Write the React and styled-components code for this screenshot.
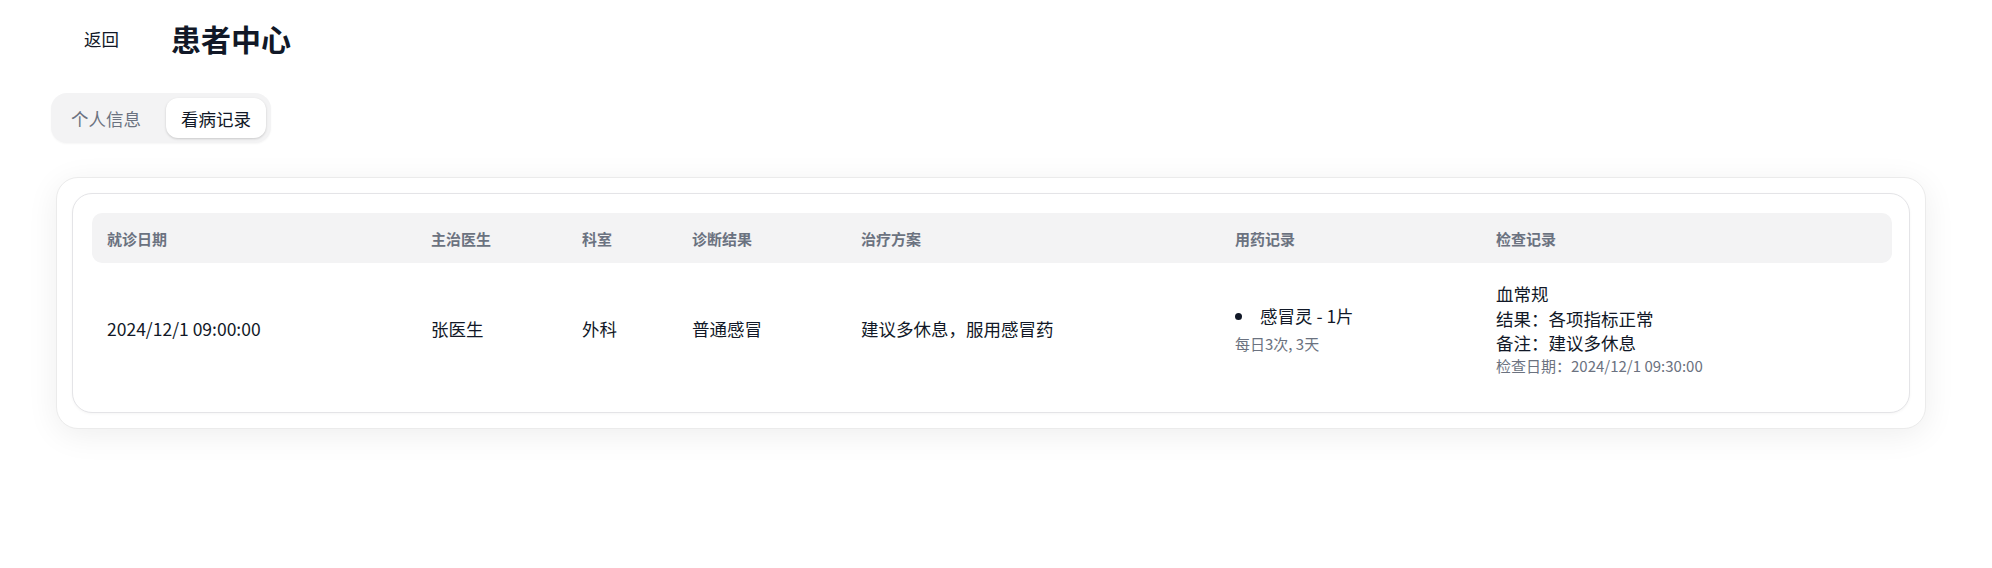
import React, { useState } from "react";
import styled, { createGlobalStyle } from "styled-components";

const GlobalStyle = createGlobalStyle`
  html, body {
    margin: 0;
    padding: 0;
    background: #ffffff;
  }
  body {
    font-family: "Noto Sans CJK SC", "Microsoft YaHei", "Noto Sans", sans-serif;
    color: #111827;
  }
`;

const Page = styled.div`
  width: 1992px;
  min-height: 568px;
  box-sizing: border-box;
  padding: 16px 66px 0 51px;
`;

const Header = styled.div`
  display: flex;
  align-items: center;
  height: 45px;
`;

const BackButton = styled.button`
  height: 45px;
  padding: 0 16px;
  margin-left: 17px;
  margin-right: 36px;
  border: none;
  background: transparent;
  font-family: inherit;
  font-size: 17.5px;
  color: #111827;
  border-radius: 10px;
  cursor: pointer;
`;

const Title = styled.h1`
  margin: 0;
  font-size: 30px;
  font-weight: 700;
  line-height: 45px;
  color: #111827;
`;

const TabList = styled.div`
  display: inline-flex;
  gap: 10px;
  margin-top: 32px;
  padding: 5px;
  border-radius: 16px;
  background: #f3f3f4;
  box-shadow: 0 1px 2px rgba(0, 0, 0, 0.04);
`;

const Tab = styled.button`
  width: 100px;
  height: 40px;
  border: none;
  border-radius: 12px;
  font-family: inherit;
  font-size: 17.5px;
  cursor: pointer;
  background: ${({ $active }) => ($active ? "#ffffff" : "transparent")};
  color: ${({ $active }) => ($active ? "#111827" : "#6b7280")};
  box-shadow: ${({ $active }) =>
    $active ? "0 1px 3px rgba(0,0,0,0.12), 0 1px 2px rgba(0,0,0,0.06)" : "none"};
`;

const Shell = styled.div`
  margin: 34px 0 0 5px;
  padding: 15px;
  border: 1px solid #ebebeb;
  border-radius: 22px;
  background: #ffffff;
  box-shadow: 0 6px 32px rgba(0, 0, 0, 0.07);
`;

const Inner = styled.div`
  padding: 19px;
  border: 1px solid #e4e4e7;
  border-radius: 20px;
  background: #ffffff;
  box-shadow: 0 1px 3px rgba(0, 0, 0, 0.04);
`;

const Table = styled.table`
  width: 100%;
  table-layout: fixed;
  border-collapse: separate;
  border-spacing: 0;
`;

const Th = styled.th`
  height: 50px;
  padding: 0 15px;
  text-align: left;
  font-size: 15px;
  font-weight: 700;
  color: #6b7280;
  background: #f3f3f4;
  &:first-child {
    border-radius: 10px 0 0 10px;
  }
  &:last-child {
    border-radius: 0 10px 10px 0;
  }
`;

const Td = styled.td`
  padding: 19px 15px 17.5px;
  font-size: 17.5px;
  line-height: 24.5px;
  color: #111827;
  vertical-align: middle;
`;

const MedLine = styled.div`
  display: flex;
  align-items: center;
`;

const Dot = styled.span`
  width: 7px;
  height: 7px;
  border-radius: 50%;
  background: #111827;
  margin: 0 18px 0 0;
`;

const Muted = styled.div`
  margin-top: ${({ $gap }) => $gap || 0}px;
  font-size: 15px;
  line-height: 20px;
  color: #6b7280;
`;

const columns = [
  { label: "就诊日期", width: 324 },
  { label: "主治医生", width: 151 },
  { label: "科室", width: 110 },
  { label: "诊断结果", width: 169 },
  { label: "治疗方案", width: 374 },
  { label: "用药记录", width: 261 },
  { label: "检查记录", width: 411 },
];

const records = [
  {
    date: "2024/12/1 09:00:00",
    doctor: "张医生",
    dept: "外科",
    diagnosis: "普通感冒",
    plan: "建议多休息，服用感冒药",
    meds: [{ name: "感冒灵 - 1片", usage: "每日3次, 3天" }],
    exams: [
      {
        name: "血常规",
        result: "各项指标正常",
        note: "建议多休息",
        date: "2024/12/1 09:30:00",
      },
    ],
  },
];

const App = () => {
  const [tab, setTab] = useState("records");

  return (
    <>
      <GlobalStyle />
      <Page>
        <Header>
          <BackButton>返回</BackButton>
          <Title>患者中心</Title>
        </Header>

        <TabList>
          <Tab $active={tab === "info"} onClick={() => setTab("info")}>个人信息</Tab>
          <Tab $active={tab === "records"} onClick={() => setTab("records")}>看病记录</Tab>
        </TabList>

        <Shell>
          <Inner>
            <Table>
              <colgroup>
                {columns.map((c) => (
                  <col key={c.label} style={{ width: c.width }} />
                ))}
              </colgroup>
              <thead>
                <tr>
                  {columns.map((c) => (
                    <Th key={c.label}>{c.label}</Th>
                  ))}
                </tr>
              </thead>
              <tbody>
                {records.map((r) => (
                  <tr key={r.date}>
                    <Td>{r.date}</Td>
                    <Td>{r.doctor}</Td>
                    <Td>{r.dept}</Td>
                    <Td>{r.diagnosis}</Td>
                    <Td>{r.plan}</Td>
                    <Td>
                      {r.meds.map((m) => (
                        <div key={m.name}>
                          <MedLine>
                            <Dot />
                            {m.name}
                          </MedLine>
                          <Muted $gap={5}>{m.usage}</Muted>
                        </div>
                      ))}
                    </Td>
                    <Td>
                      {r.exams.map((e) => (
                        <div key={e.name}>
                          <div>{e.name}</div>
                          <div>结果：{e.result}</div>
                          <div>备注：{e.note}</div>
                          <Muted>检查日期：{e.date}</Muted>
                        </div>
                      ))}
                    </Td>
                  </tr>
                ))}
              </tbody>
            </Table>
          </Inner>
        </Shell>
      </Page>
    </>
  );
};

export default App;
